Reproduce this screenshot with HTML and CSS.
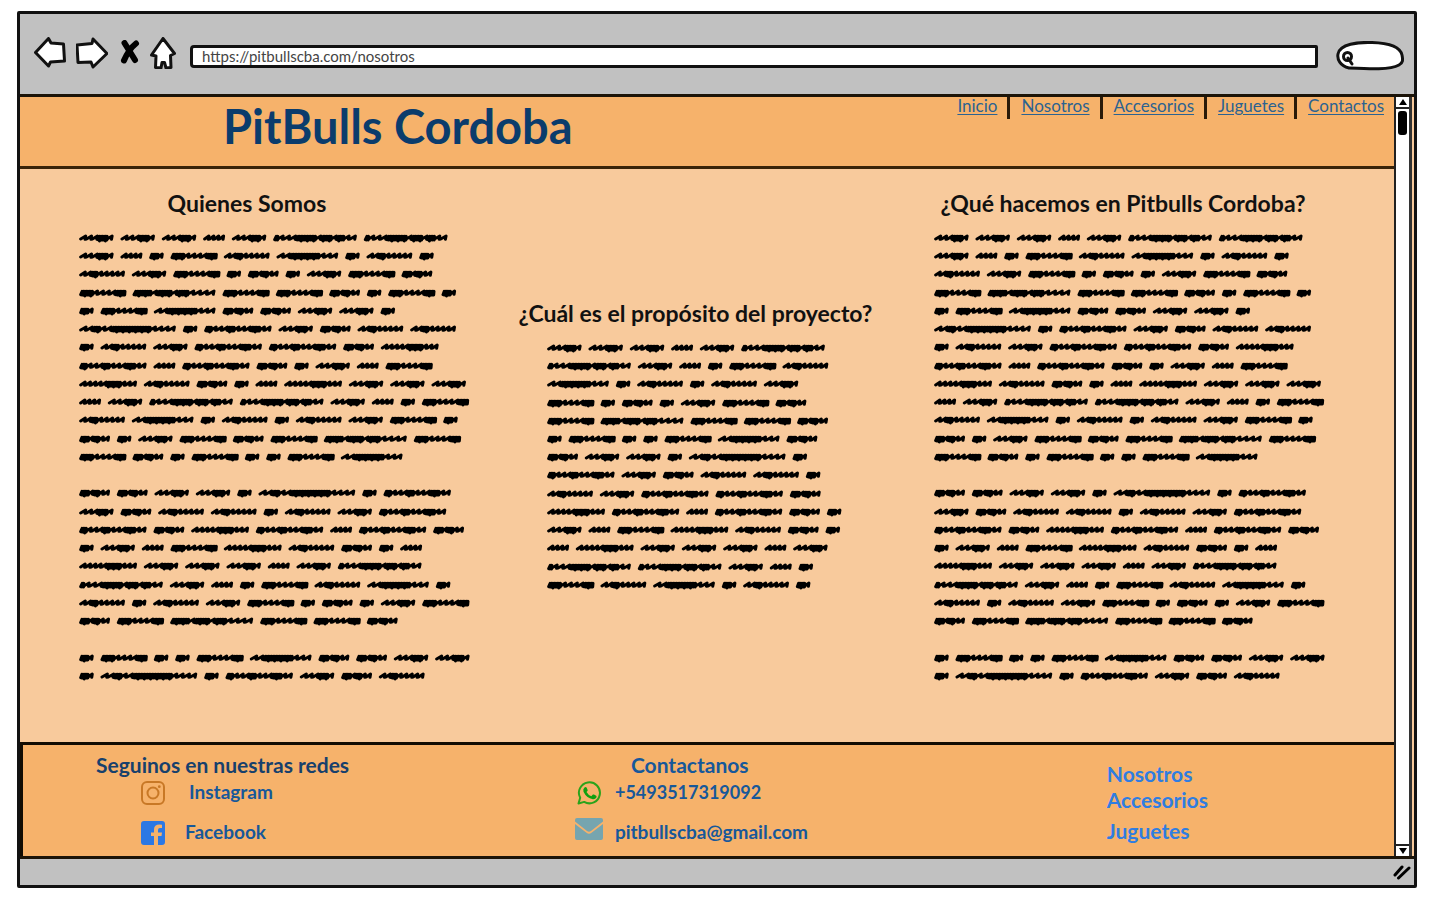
FILE: index.html
```html
<!DOCTYPE html>
<html lang="es">
<head>
<meta charset="utf-8">
<title>PitBulls Cordoba</title>
<link rel="stylesheet" href="styles.css">
</head>
<body>
<div class="window">
  <div class="toolbar">
    <button class="tool" aria-label="Atrás"><svg width="32" height="32" viewBox="0 0 32 32"><path d="M1.500 15.500 L14.500 1.500 L17 6 L29.500 7 L30.500 24 L16.500 25 L14.500 29 Z"/></svg></button>
    <button class="tool" aria-label="Adelante"><svg width="32" height="32" viewBox="0 0 32 32"><path d="M1 8 L16 6.500 L17 2 L31 16.500 L17 30 L15 25 L2 25.500 Z"/></svg></button>
    <button class="tool tool-stop" aria-label="Detener"><svg width="20" height="26" viewBox="0 0 20 26"><path class="cross" d="M4.500 3 L15 20 M16 3.500 Q9 9 4 20.500"/></svg></button>
    <button class="tool" aria-label="Inicio"><svg width="26" height="32" viewBox="0 0 26 32"><path d="M13 1.500 L24.500 16.500 L20.500 18.500 L21 30.500 L16 31 L14.500 25.500 L12 25.500 L11 31 L5.500 30.500 L6 19 L1.500 18 Z"/></svg></button>
    <input class="address" type="text" aria-label="Dirección" value="https://pitbullscba.com/nosotros">
    <label class="search">
      <svg class="search-shape" viewBox="0 0 68 30" preserveAspectRatio="none"><path d="M13 27 C4 25 1 18 2 13 C4 3 22 1 36 1.500 C52 2 64 5 66 14 C67 19 67 22 63 24 C54 29 34 28 13 27 Z"/></svg>
      <svg class="search-lens" width="12" height="15" viewBox="0 0 12 15"><circle cx="5.500" cy="5.500" r="4"/><path d="M6 7 L10 13"/></svg>
      <input type="search" aria-label="Buscar">
    </label>
  </div>

  <div class="viewport">
    <div class="page">
      <header class="header">
        <h1>PitBulls Cordoba</h1>
        <nav class="nav">
          <a href="#inicio">Inicio</a>
          <a href="#nosotros">Nosotros</a>
          <a href="#accesorios">Accesorios</a>
          <a href="#juguetes">Juguetes</a>
          <a href="#contactos">Contactos</a>
        </nav>
      </header>

      <main class="main">
        <section class="about about-left">
          <h2>Quienes Somos</h2>
          <div class="scribble scribble-long" data-lines="aaabacc abdefgdfd faedhdaeh eieehded deghhaad jdkahff dfakkhl kbkhdabe lfhdblaaa baccabde fgdfdfaed hdaeheie ehdeddeg - hhaadjdk ahffdfak khlkbkh dabelfhdb laaabac cabdefgd fdfaedhdae heieeh - deddeghhaa djdkahf"></div>
        </section>
        <section class="about about-middle">
          <h2>¿Cuál es el propósito del proyecto?</h2>
          <div class="scribble scribble-short" data-lines="aaabac cabdef gdfdfa edhdaeh eieeh deddegh haadjd kahffd fakkh lkbkhd abelfhd blaaaba ccabd efgdfd"></div>
        </section>
        <section class="about about-right">
          <h2>¿Qué hacemos en Pitbulls Cordoba?</h2>
          <div class="scribble scribble-long" data-lines="aaabacc abdefgdfd faedhdaeh eieehded deghhaad jdkahff dfakkhl kbkhdabe lfhdblaaa baccabde fgdfdfaed hdaeheie ehdeddeg - hhaadjdk ahffdfak khlkbkh dabelfhdb laaabac cabdefgd fdfaedhdae heieeh - deddeghhaa djdkahf"></div>
        </section>
      </main>

      <footer class="footer">
        <section class="social">
          <h3>Seguinos en nuestras redes</h3>
          <a class="contact" href="#instagram">
            <svg class="instagram" width="24" height="24" viewBox="0 0 24 24"><rect x="1" y="1" width="22" height="22" rx="5"/><circle cx="12" cy="12" r="5.500"/><circle class="dot" cx="18.300" cy="5.700" r="1.400"/></svg>
            <span>Instagram</span>
          </a>
          <a class="contact facebook-row" href="#facebook">
            <svg width="24" height="24" viewBox="0 0 24 24"><path fill="#2c78e4" d="M3 0 H21 Q24 0 24 3 V21 Q24 24 21 24 H17 V15 H20.500 L21 11.500 H17 V9 Q17 7 19 7 H21 V3.700 Q13 2.500 13 8.500 V11.500 H10 V15 H13 V24 H3 Q0 24 0 21 V3 Q0 0 3 0 Z"/></svg>
            <span>Facebook</span>
          </a>
        </section>
        <section class="reach">
          <h3>Contactanos</h3>
          <a class="contact phone-row" href="tel:+5493517319092">
            <svg class="whatsapp" width="26" height="24" viewBox="0 0 26 24"><path class="bubble" d="M2.500 22.500 L4.200 16.800 A10.500 10.500 0 1 1 8.200 20.900 Z"/><path class="phone" d="M8.500 6.500 Q10 5.500 10.700 6.800 L11.700 9.200 Q11.800 10 10.500 11 Q12.300 14.200 15.300 15.200 L16.900 13.600 Q17.300 13.300 18 13.600 L20.200 14.700 Q20.900 15.200 20.400 16.500 Q19.300 18.500 16.800 18.300 Q10.500 17.200 7.500 10.800 Q6.700 8 8.500 6.500 Z"/></svg>
            <span>+5493517319092</span>
          </a>
          <a class="contact" href="mailto:pitbullscba@gmail.com">
            <svg class="mail" width="28" height="22" viewBox="0 0 28 22"><path fill="#76a5af" d="M2 0 H26 Q28 0 28 2 V3.500 L16 13 Q14 14.500 12 13 L0 3.500 V2 Q0 0 2 0 Z M0 6 L11.500 14.800 Q14 16.500 16.500 14.800 L28 6 V20 Q28 22 26 22 H2 Q0 22 0 20 Z"/></svg>
            <span>pitbullscba@gmail.com</span>
          </a>
        </section>
        <nav class="links">
          <a href="#nosotros">Nosotros</a>
          <a href="#accesorios">Accesorios</a>
          <a href="#juguetes" class="links-last">Juguetes</a>
        </nav>
      </footer>
    </div>

    <div class="scrollbar">
      <button class="arrow" aria-label="Subir"><svg width="10" height="8" viewBox="0 0 10 8"><path d="M5 1 L9 7 H1 Z"/></svg></button>
      <div class="thumb"></div>
      <button class="arrow arrow-down" aria-label="Bajar"><svg width="10" height="8" viewBox="0 0 10 8"><path d="M5 7 L9 1 H1 Z"/></svg></button>
    </div>
  </div>

  <div class="status">
    <svg width="18" height="16" viewBox="0 0 18 16"><path d="M2 11 L9 3 M5.500 14 L16 4"/></svg>
  </div>
</div>
<script src="scribble.js"></script>
</body>
</html>
```

FILE: styles.css
```css
* { box-sizing: border-box; }

body {
  margin: 0;
  min-height: 100vh;
  padding: 11px 23px 12px 17px;
  display: flex;
  background: #fff;
  font-family: Lato, "Open Sans", sans-serif;
}

h1, h2, h3 { margin: 0; }
button, input { font: inherit; margin: 0; padding: 0; border: 0; background: none; }
svg { display: block; flex: none; }

.window {
  flex: 1;
  min-width: 0;
  display: flex;
  flex-direction: column;
  background: #c1c1c1;
  border: 3px solid #111;
  border-radius: 2px;
}

.toolbar {
  height: 80px;
  display: flex;
  align-items: center;
  padding: 0 10px 2px 14px;
}
.tool { margin-right: 10px; }
.tool path { fill: #fff; stroke: #111; stroke-width: 3; stroke-linejoin: round; }
.tool .cross { fill: none; stroke: #000; stroke-width: 6; stroke-linecap: round; }
.tool-stop { margin-left: 2px; }
.address {
  flex: 1;
  min-width: 0;
  height: 23px;
  margin: 6px 18px 0 4px;
  padding-left: 9px;
  background: #fff;
  border: 3px solid #111;
  border-radius: 4px 2px 2px 4px;
  color: #444;
  font-size: 15px;
  line-height: 16px;
}
.search {
  position: relative;
  display: flex;
  align-items: center;
  width: 68px;
  height: 30px;
  margin-top: 6px;
  padding: 4px 8px 0 6px;
}
.search-shape { position: absolute; inset: 0; width: 100%; height: 100%; }
.search-shape path { fill: #fff; stroke: #111; stroke-width: 3; }
.search-lens { position: relative; fill: none; stroke: #111; stroke-width: 3; stroke-linecap: round; }
.search input { position: relative; flex: 1; min-width: 0; font-size: 12px; }

.viewport {
  flex: 1;
  display: flex;
  border-top: 3px solid #1c1408;
  border-bottom: 3px solid #1c1408;
  background: #f8ca9c;
}
.page { flex: 1; min-width: 0; display: flex; flex-direction: column; }

.header {
  height: 72px;
  display: flex;
  justify-content: space-between;
  align-items: flex-start;
  padding-left: 203px;
  background: #f6b26b;
  border-bottom: 3px solid #3a2409;
}
h1 { color: #0b3c6c; font-size: 47px; line-height: 58px; }
.nav { display: flex; }
.nav a {
  height: 22px;
  padding: 0 10px 0 11px;
  color: #2b6291;
  font-size: 17px;
  line-height: 18px;
  text-underline-offset: 2px;
}
.nav a + a { border-left: 3px solid #2a1a08; }

.main {
  flex: 1;
  display: grid;
  grid-template-columns: minmax(0, 392fr) minmax(0, 361fr) minmax(0, 406fr);
  column-gap: 44px;
  padding: 20px 68px 0 59px;
}
h2 {
  color: #111;
  font-size: 23px;
  font-weight: bold;
  line-height: 28px;
  margin-bottom: 12px;
  text-align: center;
  white-space: nowrap;
}
.about-left h2 { padding-right: 56px; }
.about-middle { padding-top: 110px; }
.about-middle .scribble { padding-left: 32px; }
.about-right .scribble { padding-left: 14px; }
.scribble { display: grid; grid-auto-rows: 1fr; }
.scribble-long { height: 456px; }
.scribble-short { height: 255px; }
.line { width: 400px; height: 18px; }
.line path { fill: none; stroke: #000; stroke-width: 9; stroke-linejoin: round; stroke-linecap: round; }

.footer {
  height: 114px;
  display: grid;
  grid-template-columns: 480fr 530fr 364fr;
  background: #f6b26b;
  border-top: 3px solid #120c03;
  border-left: 3px solid #120c03;
  color: #17589a;
  font-weight: bold;
}
.footer a { color: inherit; text-decoration: none; }
h3 { font-size: 21px; line-height: 24px; }
.social { padding: 8px 0 0 73px; }
.social h3 { color: #17406c; }
.contact { display: flex; align-items: center; height: 40px; font-size: 19px; line-height: 24px; }
.contact:first-of-type { height: 32px; margin-bottom: 4px; }
.social .contact { padding-left: 45px; gap: 24px; }
.social .facebook-row { gap: 20px; }
.reach { padding: 8px 0 0 73px; }
.reach h3 { padding-left: 56px; }
.contact span { padding-bottom: 3px; }
.reach .contact { gap: 12px; }
.reach .phone-row { font-size: 18px; }
.reach .contact svg { width: 28px; }
.reach .mail { margin-bottom: 8px; }
.instagram { fill: none; stroke: #c87826; stroke-width: 2; }
.instagram .dot { fill: #c87826; stroke: none; }
.bubble { fill: none; stroke: #2aa31b; stroke-width: 2; stroke-linejoin: round; }
.phone { fill: #0fa00f; }
.links { display: flex; flex-direction: column; padding: 16px 0 0 76px; color: #2f7de1; font-size: 21px; line-height: 26px; }
.links-last { margin-top: 5px; }

.scrollbar {
  width: 18px;
  margin-right: 2px;
  display: flex;
  flex-direction: column;
  align-items: center;
  background: #fff;
  border-left: 2px solid #222;
  border-right: 3px solid #333;
}
.arrow { width: 100%; height: 12px; display: flex; justify-content: center; align-items: center; border-bottom: 2px solid #222; }
.arrow-down { margin-top: auto; border-bottom: 0; border-top: 2px solid #222; }
.thumb { width: 9px; height: 24px; margin-top: 2px; border-radius: 3px; background: #000; }

.status { height: 26px; display: flex; justify-content: flex-end; align-items: center; padding-right: 3px; }
.status path { fill: none; stroke: #000; stroke-width: 3; stroke-linecap: round; }
```

FILE: scribble.js
```js
// Each word is a zigzag: "s" is an open slanted stroke, "m" a dense one.
const WORDS = {
  a: [107, "sssmmms"],
  b: [69, "ssss"],
  c: [255, "msssmmmmmmsmmmsmmss"],
  d: [47, "mmms"],
  e: [143, "mmmmssssmmm"],
  f: [141, "ssmmsssss"],
  g: [189, "ssmmmmmmmmmsss"],
  h: [96, "mmmsmmss"],
  i: [253, "mmmmmsmmmmsmmmssss"],
  j: [294, "ssmmssmmmmmmmmmmmmssss"],
  k: [206, "mmsssmmsssmmmss"],
  l: [177, "sssssmmmmmsss"]
};
const GAP = 17;
const STEP = { s: 18, m: 9 };

function wordPath(x, [width, pattern]) {
  const total = [...pattern].reduce((sum, c) => sum + STEP[c], 0);
  const scale = (width - 10) / total;
  let left = x + 5;
  let path = "";
  [...pattern].forEach((c, i) => {
    const w = STEP[c] * scale;
    const at = (fx, y) => `${(left + fx * w).toFixed(1)} ${y} `;
    path += i ? "L" : "M";
    path += c === "s"
      ? at(0, 30) + "L" + at(0.85, 21) + "L" + at(0.75, 31)
      : at(0, 32) + "L" + at(0.5, 22) + "L" + at(0.4, i % 2 ? 36 : 33) + "L" + at(1, 22) + "L" + at(0.9, 33);
    left += w;
  });
  return path;
}

document.querySelectorAll(".scribble").forEach((block) => {
  block.innerHTML = block.dataset.lines.split(" ").map((line) => {
    let x = 0;
    let d = "";
    for (const key of line.replace("-", "")) {
      d += wordPath(x, WORDS[key]);
      x += WORDS[key][0] + GAP;
    }
    return `<svg class="line" viewBox="0 0 1200 54" aria-hidden="true"><path d="${d}"/></svg>`;
  }).join("");
});
```
